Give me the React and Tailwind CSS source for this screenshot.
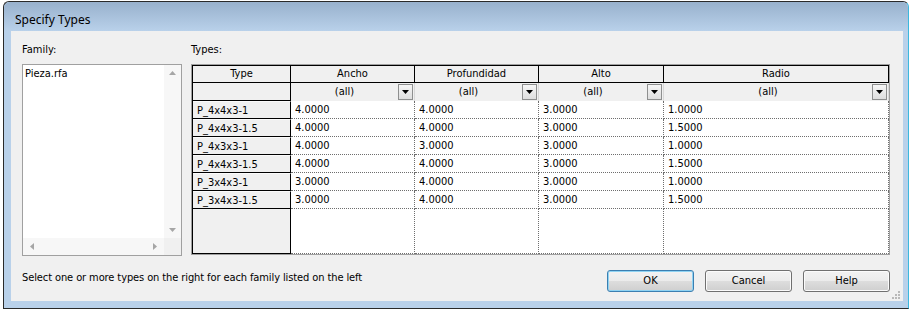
import React from "react";

const rows = [
  ["P_4x4x3-1", "4.0000", "4.0000", "3.0000", "1.0000"],
  ["P_4x4x3-1.5", "4.0000", "4.0000", "3.0000", "1.5000"],
  ["P_4x3x3-1", "4.0000", "3.0000", "3.0000", "1.0000"],
  ["P_4x4x3-1.5", "4.0000", "4.0000", "3.0000", "1.5000"],
  ["P_3x4x3-1", "3.0000", "4.0000", "3.0000", "1.0000"],
  ["P_3x4x3-1.5", "3.0000", "4.0000", "3.0000", "1.5000"],
];

const columns = ["Ancho", "Profundidad", "Alto", "Radio"];

function DropButton() {
  return (
    <div className="w-[15px] h-[16px] mr-[1px] border border-[#8e8f8f] bg-gradient-to-b from-[#f6f6f6] to-[#dedede] flex items-center justify-center">
      <svg width="7" height="4" viewBox="0 0 7 4">
        <path d="M0 0h7L3.5 4z" fill="#000" />
      </svg>
    </div>
  );
}

function Arrow({ dir }) {
  const d = {
    up: "M0 4L3.5 0 7 4z",
    down: "M0 0h7L3.5 4z",
    left: "M4 0v7L0 3.5z",
    right: "M0 0v7l4-3.5z",
  }[dir];
  const vert = dir === "up" || dir === "down";
  return (
    <svg width={vert ? 7 : 4} height={vert ? 4 : 7} viewBox={vert ? "0 0 7 4" : "0 0 4 7"}>
      <path d={d} fill="#a6a6a6" />
    </svg>
  );
}

function FamilyList() {
  return (
    <div className="w-[160px] h-[192px] border border-[#a0a0a0] bg-white grid grid-cols-[1fr_17px] grid-rows-[1fr_17px]">
      <div className="pl-[2px] pt-[2px] leading-[14px]">Pieza.rfa</div>
      <div className="bg-[#f7f7f7] flex flex-col items-center justify-between pt-[6px] pb-[6px]">
        <Arrow dir="up" />
        <Arrow dir="down" />
      </div>
      <div className="bg-[#f7f7f7] flex items-center justify-between pl-[7px] pr-[7px]">
        <Arrow dir="left" />
        <Arrow dir="right" />
      </div>
      <div className="bg-[#f0f0f0]" />
    </div>
  );
}

function TypesTable() {
  return (
    <div className="w-[699px] h-[191px] border border-[#a0a0a0] bg-[#f0f0f0]">
      <div className="h-full border-l border-t border-black grid grid-cols-[98px_124px_124px_125px_225px] grid-rows-[17px_18px_repeat(6,18px)_45px]">
        <div className="border-r border-b border-black text-center leading-[16px]">Type</div>
        {columns.map((c) => (
          <div key={c} className="border-r border-b border-black text-center leading-[16px]">
            {c}
          </div>
        ))}

        <div className="border-r border-b border-black" />
        {columns.map((c) => (
          <div key={c} className="flex items-center border-r border-[#d8d8d8]">
            <div className="flex-1 text-center leading-[16px]">(all)</div>
            <DropButton />
          </div>
        ))}

        {rows.map((r, i) => (
          <React.Fragment key={i}>
            <div className="border-r border-b border-black pl-[4px] leading-[17px] bg-[#f0f0f0] border-t border-t-[#fbfbfb]">
              {r[0]}
            </div>
            {r.slice(1).map((v, j) => (
              <div
                key={j}
                className="bg-white border-r border-b border-dotted border-[#6e6e6e] pl-[4px] leading-[17px]"
              >
                {v}
              </div>
            ))}
          </React.Fragment>
        ))}

        <div className="border-r border-b border-black" />
        {columns.map((c) => (
          <div key={c} className="bg-white border-r border-b border-dotted border-[#6e6e6e]" />
        ))}
      </div>
    </div>
  );
}

function Btn({ children, focused }) {
  return (
    <div
      className={`w-[87px] h-[22px] rounded-[3px] border flex items-center justify-center bg-[linear-gradient(to_bottom,#f2f2f2_0%,#ebebeb_50%,#dddddd_51%,#cfcfcf_100%)] ${
        focused ? "border-[#3c7fb1] shadow-[inset_0_0_0_1px_#8fd3f3]" : "border-[#707070] shadow-[inset_0_0_0_1px_#fbfbfb]"
      }`}
    >
      {children}
    </div>
  );
}

export default function App() {
  return (
    <div className="w-[910px] h-[313px] bg-white overflow-hidden pt-[1px] pl-[3px] text-[11px] text-black font-['DejaVu_Sans_Condensed','Liberation_Sans',sans-serif]">
      <div className="w-[906px] h-[308px] border border-[#2a2a2a] border-r-[#3cb8de] rounded-tl-[6px] rounded-tr-[6px] bg-[#b9d1ea] flex flex-col">
        <div className="h-[29px] shrink-0 pl-[11px] pt-[10px] leading-[16px] text-[12px] rounded-tl-[6px] rounded-tr-[6px] bg-gradient-to-b from-[#98b1cd] to-[#b9d1ea] font-['Noto_Sans','Liberation_Sans',sans-serif]">
          Specify Types
        </div>
        <div className="ml-[7px] w-[892px] h-[270px] shrink-0 bg-[#f0f0f0] pt-[12px] pl-[11px] relative">
          <div className="flex">
            <div className="flex flex-col">
              <div className="h-[14px] leading-[14px]">Family:</div>
              <div className="mt-[7px]">
                <FamilyList />
              </div>
            </div>
            <div className="flex flex-col ml-[9px]">
              <div className="h-[14px] leading-[14px]">Types:</div>
              <div className="mt-[7px]">
                <TypesTable />
              </div>
            </div>
          </div>
          <div className="flex items-start mt-[13px] w-[868px]">
            <div className="flex-1 pt-[2px] leading-[14px] tracking-[-0.1px]">
              Select one or more types on the right for each family listed on the left
            </div>
            <div className="flex gap-[11px] pt-[1px]">
              <Btn focused>OK</Btn>
              <Btn>Cancel</Btn>
              <Btn>Help</Btn>
            </div>
          </div>
          <svg className="absolute right-[2px] bottom-[1px]" width="10" height="10" viewBox="0 0 10 10">
            <rect x="7" y="1" width="2" height="2" fill="#b8b8b8" />
            <rect x="4" y="4" width="2" height="2" fill="#b8b8b8" />
            <rect x="7" y="4" width="2" height="2" fill="#b8b8b8" />
            <rect x="1" y="7" width="2" height="2" fill="#b8b8b8" />
            <rect x="4" y="7" width="2" height="2" fill="#b8b8b8" />
            <rect x="7" y="7" width="2" height="2" fill="#b8b8b8" />
          </svg>
        </div>
      </div>
    </div>
  );
}
